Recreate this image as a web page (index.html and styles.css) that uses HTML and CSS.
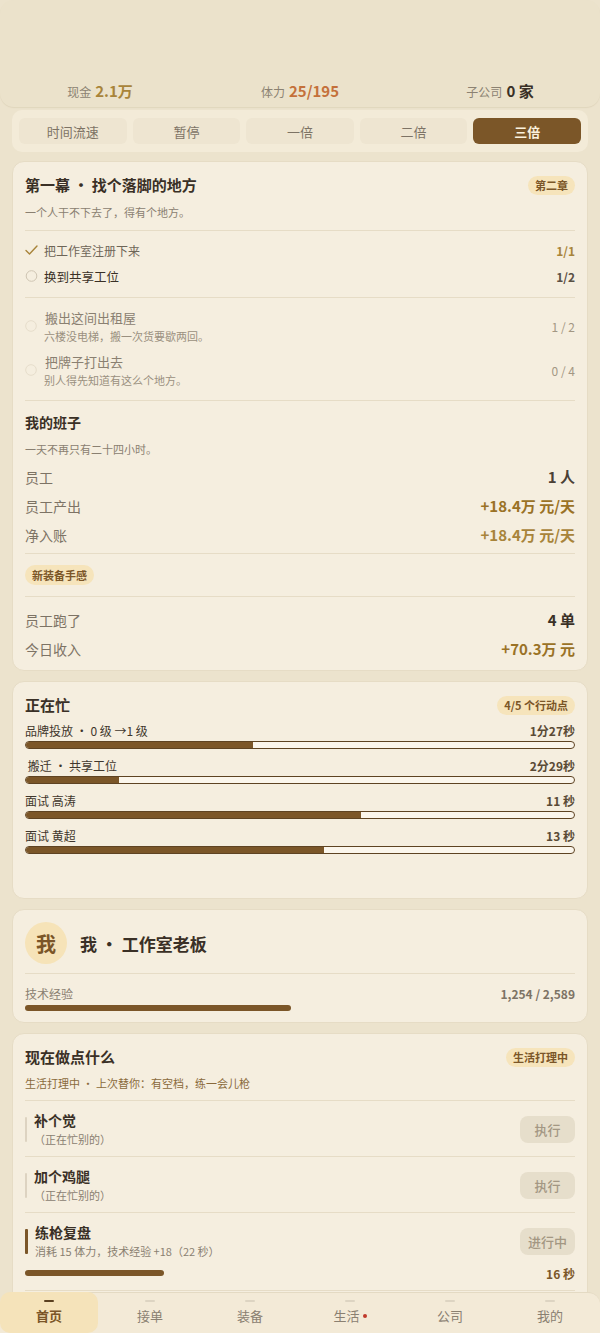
FILE: index.html
```html
<!DOCTYPE html>
<html lang="zh-CN">
<head>
<meta charset="utf-8">
<title>工作室</title>
<link rel="stylesheet" href="styles.css">
</head>
<body>
<header class="top">
  <div class="stat"><span class="stat-label">现金</span><span class="stat-val gold">2.1万</span></div>
  <div class="stat"><span class="stat-label">体力</span><span class="stat-val orange">25/195</span></div>
  <div class="stat"><span class="stat-label">子公司</span><span class="stat-val dark">0 家</span></div>
</header>

<nav class="speed">
  <div class="speed-btn">时间流速</div>
  <div class="speed-btn">暂停</div>
  <div class="speed-btn">一倍</div>
  <div class="speed-btn">二倍</div>
  <div class="speed-btn active">三倍</div>
</nav>

<section class="card card-first">
  <div class="card-head">
    <h2 class="title">第一幕 · 找个落脚的地方</h2>
    <span class="badge">第二章</span>
  </div>
  <p class="desc">一个人干不下去了，得有个地方。</p>
  <div class="divider"></div>
  <div class="tasks">
    <div class="task done">
      <svg class="ico" width="13" height="12" viewBox="0 0 13 12"><polyline points="1,6.5 4.5,10 12,2" fill="none" stroke="#a8843a" stroke-width="1.4" stroke-linecap="round" stroke-linejoin="round"/></svg>
      <span class="task-name">把工作室注册下来</span>
      <span class="task-num num-gold">1/1</span>
    </div>
    <div class="task">
      <svg class="ico" width="13" height="12" viewBox="0 0 13 12"><circle cx="6.5" cy="6" r="5.3" fill="none" stroke="#cfc5b3" stroke-width="1"/></svg>
      <span class="task-name strong">换到共享工位</span>
      <span class="task-num">1/2</span>
    </div>
  </div>
  <div class="divider"></div>
  <div class="faded">
    <div class="ftask">
      <svg class="ico" width="13" height="12" viewBox="0 0 13 12"><circle cx="6" cy="6" r="5.3" fill="none" stroke="#e6ddcb" stroke-width="1"/></svg>
      <div class="ftask-text">
        <div class="ftask-name">搬出这间出租屋</div>
        <div class="ftask-sub">六楼没电梯，搬一次货要歇两回。</div>
      </div>
      <span class="ftask-num">1 / 2</span>
    </div>
    <div class="ftask">
      <svg class="ico" width="13" height="12" viewBox="0 0 13 12"><circle cx="6" cy="6" r="5.3" fill="none" stroke="#e6ddcb" stroke-width="1"/></svg>
      <div class="ftask-text">
        <div class="ftask-name">把牌子打出去</div>
        <div class="ftask-sub">别人得先知道有这么个地方。</div>
      </div>
      <span class="ftask-num">0 / 4</span>
    </div>
  </div>
  <div class="divider"></div>
  <h3 class="sub-title">我的班子</h3>
  <p class="desc desc-team">一天不再只有二十四小时。</p>
  <div class="rows rows-team">
    <div class="row"><span class="row-label">员工</span><span class="row-val">1 人</span></div>
    <div class="row"><span class="row-label">员工产出</span><span class="row-val val-gold-dark">+18.4万 元/天</span></div>
    <div class="row"><span class="row-label">净入账</span><span class="row-val val-gold">+18.4万 元/天</span></div>
  </div>
  <div class="divider"></div>
  <div class="tag-wrap"><span class="badge badge-tag">新装备手感</span></div>
  <div class="divider"></div>
  <div class="rows rows-today">
    <div class="row"><span class="row-label">员工跑了</span><span class="row-val val-dark">4 单</span></div>
    <div class="row"><span class="row-label">今日收入</span><span class="row-val val-gold-dark">+70.3万 元</span></div>
  </div>
</section>

<section class="card busy">
  <div class="card-head">
    <h2 class="title">正在忙</h2>
    <span class="badge">4/5 个行动点</span>
  </div>
  <div class="jobs">
    <div class="job">
      <div class="job-line"><span class="job-name">品牌投放 · 0 级 →1 级</span><span class="job-time">1分27秒</span></div>
      <div class="track"><div class="fill" style="width:41.4%"></div></div>
    </div>
    <div class="job">
      <div class="job-line"><span class="job-name">&nbsp;搬迁 · 共享工位</span><span class="job-time">2分29秒</span></div>
      <div class="track"><div class="fill" style="width:16.9%"></div></div>
    </div>
    <div class="job">
      <div class="job-line"><span class="job-name">面试 高涛</span><span class="job-time">11 秒</span></div>
      <div class="track"><div class="fill" style="width:61.1%"></div></div>
    </div>
    <div class="job">
      <div class="job-line"><span class="job-name">面试 黄超</span><span class="job-time">13 秒</span></div>
      <div class="track"><div class="fill" style="width:54.4%"></div></div>
    </div>
  </div>
</section>

<section class="card me">
  <div class="me-head">
    <div class="avatar">我</div>
    <h2 class="me-title">我 · 工作室老板</h2>
  </div>
  <div class="divider"></div>
  <div class="exp-line"><span class="exp-label">技术经验</span><span class="exp-val">1,254 / 2,589</span></div>
  <div class="plain-track"><div class="plain-fill" style="width:48.4%"></div></div>
</section>

<section class="card doing">
  <div class="card-head">
    <h2 class="title">现在做点什么</h2>
    <span class="badge">生活打理中</span>
  </div>
  <p class="desc desc-life">生活打理中 · 上次替你：有空档，练一会儿枪</p>
  <div class="divider"></div>
  <div class="act">
    <div class="act-body">
      <span class="mark"></span>
      <div>
        <div class="act-name">补个觉</div>
        <div class="act-sub">（正在忙别的）</div>
      </div>
    </div>
    <span class="act-btn">执行</span>
  </div>
  <div class="divider"></div>
  <div class="act">
    <div class="act-body">
      <span class="mark"></span>
      <div>
        <div class="act-name">加个鸡腿</div>
        <div class="act-sub">（正在忙别的）</div>
      </div>
    </div>
    <span class="act-btn">执行</span>
  </div>
  <div class="divider"></div>
  <div class="act act-running">
    <div class="act-top">
      <div class="act-body">
        <span class="mark mark-on"></span>
        <div>
          <div class="act-name">练枪复盘</div>
          <div class="act-sub">消耗 15 体力，技术经验 +18（22 秒）</div>
        </div>
      </div>
      <span class="act-btn">进行中</span>
    </div>
    <div class="act-progress">
      <div class="plain-track grow"><div class="plain-fill" style="width:27%"></div></div>
      <span class="act-time">16 秒</span>
    </div>
  </div>
  <div class="divider"></div>
  <div class="card-tail"></div>
</section>

<footer class="nav">
  <div class="nav-item active"><span class="dash"></span><span class="nav-label">首页</span></div>
  <div class="nav-item"><span class="dash"></span><span class="nav-label">接单</span></div>
  <div class="nav-item"><span class="dash"></span><span class="nav-label">装备</span></div>
  <div class="nav-item"><span class="dash"></span><span class="nav-label">生活<i class="dot"></i></span></div>
  <div class="nav-item"><span class="dash"></span><span class="nav-label">公司</span></div>
  <div class="nav-item"><span class="dash"></span><span class="nav-label">我的</span></div>
</footer>
</body>
</html>
```
FILE: styles.css
```css
* { box-sizing: border-box; margin: 0; padding: 0; }
body {
  font-family: "Noto Sans CJK SC", "Noto Sans", sans-serif;
  background: #ece3cd;
  color: #3a3026;
  width: 600px;
  padding-bottom: 41px;
}
.gold { color: #a8843a; }
.orange { color: #c4703a; }
.dark { color: #3a3026; }

/* header */
.top {
  height: 107px;
  background: #ebe2cb;
  border-radius: 14px;
  box-shadow: 0 1px 1px #e0d6bd;
  display: grid;
  grid-template-columns: repeat(3, 1fr);
  align-items: end;
  padding-bottom: 5px;
}
.stat { display: flex; justify-content: center; align-items: baseline; gap: 4px; }
.stat-label { font-size: 12px; color: #8c8272; }
.stat-val { font-size: 15px; font-weight: 700; line-height: 22px; }

/* speed tabs */
.speed {
  margin: 3px 12px 0;
  padding: 8px 7px;
  background: #f3ebd8;
  border-radius: 10px;
  display: flex;
  gap: 6px;
}
.speed-btn {
  flex: 1;
  height: 26px;
  border-radius: 6px;
  background: #eee5d1;
  color: #7d7365;
  font-size: 13px;
  display: flex;
  align-items: center;
  justify-content: center;
}
.speed-btn.active { background: #7b5628; color: #fbf2de; font-weight: 700; }

/* cards */
.card {
  margin: 10px 12px 0;
  padding: 12px 12px 0;
  background: #f5eedf;
  border: 1px solid #e6dcc5;
  border-radius: 12px;
}
.card-first { margin-top: 9px; padding-bottom: 7px; }
.card-head { display: flex; justify-content: space-between; align-items: center; height: 22px; }
.title { font-size: 15px; font-weight: 700; line-height: 22px; color: #3a3026; }
.badge {
  font-size: 11px;
  font-weight: 700;
  line-height: 19px;
  color: #7b5628;
  background: #f6e4bb;
  padding: 0 7px;
  border-radius: 10px;
}
.desc { font-size: 11px; line-height: 16px; color: #8a8071; margin-top: 8px; }
.divider { height: 1px; background: #e6dcc6; margin-top: 10px; }

/* tasks */
.tasks { padding: 6px 0 8px; }
.task { display: flex; align-items: center; height: 26px; }
.ico { flex: none; margin-right: 6px; }
.task-name { font-size: 12px; color: #6e6557; flex: 1; }
.task-name.strong { color: #3a3026; font-size: 12.5px; }
.task-num { font-size: 12px; font-weight: 700; color: #5a5045; }
.task-num.num-gold { color: #a8843a; }
.tasks + .divider { margin-top: 0; }

.faded { padding-top: 10px; display: flex; flex-direction: column; gap: 8px; }
.ftask { display: flex; align-items: center; }
.ftask-text { flex: 1; }
.ftask-name { font-size: 13px; line-height: 20px; color: #8a8071; padding-left: 1px; }
.ftask-sub { font-size: 11px; line-height: 16px; color: #9a9080; }
.ftask-num { font-size: 12px; color: #a39783; }
.faded + .divider { margin-top: 12px; }

.sub-title { font-size: 14px; font-weight: 700; line-height: 20px; margin-top: 11px; }
.desc-team { margin-top: 9px; }
.rows-team { margin-top: 5px; }
.row { display: flex; justify-content: space-between; align-items: center; height: 29px; }
.row-label { font-size: 14px; color: #7d7365; }
.row-val { font-size: 15px; font-weight: 700; color: #4a4035; }
.row-val.val-gold-dark { color: #9a7226; }
.row-val.val-gold { color: #a8843a; }
.row-val.val-dark { color: #3a3026; }
.rows-team + .divider { margin-top: 4px; }
.tag-wrap { margin-top: 11px; height: 20px; display: flex; }
.badge-tag { line-height: 20px; }
.tag-wrap + .divider { margin-top: 11px; }
.rows-today { margin-top: 8px; }

/* busy */
.busy { min-height: 218px; }
.jobs { margin-top: 6px; }
.job { margin-bottom: 8px; }
.job-line { display: flex; justify-content: space-between; align-items: center; height: 17px; }
.job-name { font-size: 12px; color: #3f362c; }
.job-time { font-size: 12px; font-weight: 700; color: #5a4a35; }
.track {
  margin-top: 2px;
  height: 8px;
  border: 1px solid #5e4322;
  border-radius: 4px;
  background: #fbf6ec;
  overflow: hidden;
}
.fill { height: 100%; background: #7b5628; }

/* me */
.me { padding-bottom: 11px; }
.me-head { display: flex; align-items: center; gap: 13px; }
.avatar {
  width: 42px; height: 42px; border-radius: 50%;
  background: #f6e3b8; color: #7b5628;
  font-size: 20px; font-weight: 700;
  display: flex; align-items: center; justify-content: center;
}
.me-title { font-size: 17px; font-weight: 700; color: #3a3026; }
.me .divider { margin-top: 9px; }
.exp-line { display: flex; justify-content: space-between; align-items: center; height: 17px; margin-top: 11px; }
.exp-label { font-size: 12px; color: #8a8071; }
.exp-val { font-size: 12px; font-weight: 700; color: #7d7365; }
.plain-track { height: 6px; margin-top: 3px; border-radius: 3px; }
.plain-fill { height: 100%; background: #7b5628; border-radius: 3px; }

/* doing */
.desc-life { margin-top: 7px; color: #8a6a3c; }
.desc-life + .divider { margin-top: 9px; }
.act { display: flex; justify-content: space-between; align-items: center; padding: 9px 0 8px; }
.act-running { flex-direction: column; align-items: stretch; }
.act-top { display: flex; justify-content: space-between; align-items: center; }
.act + .divider { margin-top: 0; }
.act-body { display: flex; align-items: center; gap: 7px; }
.mark { width: 2px; height: 25px; background: #ddd3c1; border-radius: 1px; }
.mark-on { width: 3px; background: #7b5628; }
.act-name { font-size: 14px; font-weight: 700; line-height: 20px; color: #3a3026; }
.act-sub { font-size: 11px; line-height: 18px; color: #8a8071; }
.act-btn {
  width: 55px; height: 27px; border-radius: 8px;
  background: #e6decb; color: #a39783;
  font-size: 13px; font-weight: 500;
  display: flex; align-items: center; justify-content: center;
}
.act-progress { display: flex; align-items: center; gap: 8px; margin-top: 4px; height: 18px; }
.grow { flex: 1; margin-top: 0; }
.act-time { font-size: 12px; font-weight: 700; color: #7b5628; }
.card-tail { height: 30px; }

/* nav */
.nav {
  position: fixed; left: 0; right: 0; bottom: 0;
  height: 41px;
  background: #f3ead7;
  border-top: 1px solid #e4dac3;
  border-radius: 12px 12px 0 0;
  display: grid;
  grid-template-columns: repeat(6, 1fr);
}
.nav-item { display: flex; flex-direction: column; align-items: center; padding-top: 7px; gap: 5px; }
.nav-item.active { background: #f5e3ba; border-radius: 10px; margin-right: 2px; margin-top: -1px; padding-top: 8px; }
.dash { width: 10px; height: 2px; background: #ddd4c2; border-radius: 1px; }
.active .dash { background: #5a4020; }
.nav-label { font-size: 13px; line-height: 18px; color: #8a8071; display: flex; align-items: center; }
.active .nav-label { color: #7b5628; font-weight: 700; }
.dot { width: 4px; height: 4px; border-radius: 50%; background: #c0392b; margin-left: 3px; }
```
